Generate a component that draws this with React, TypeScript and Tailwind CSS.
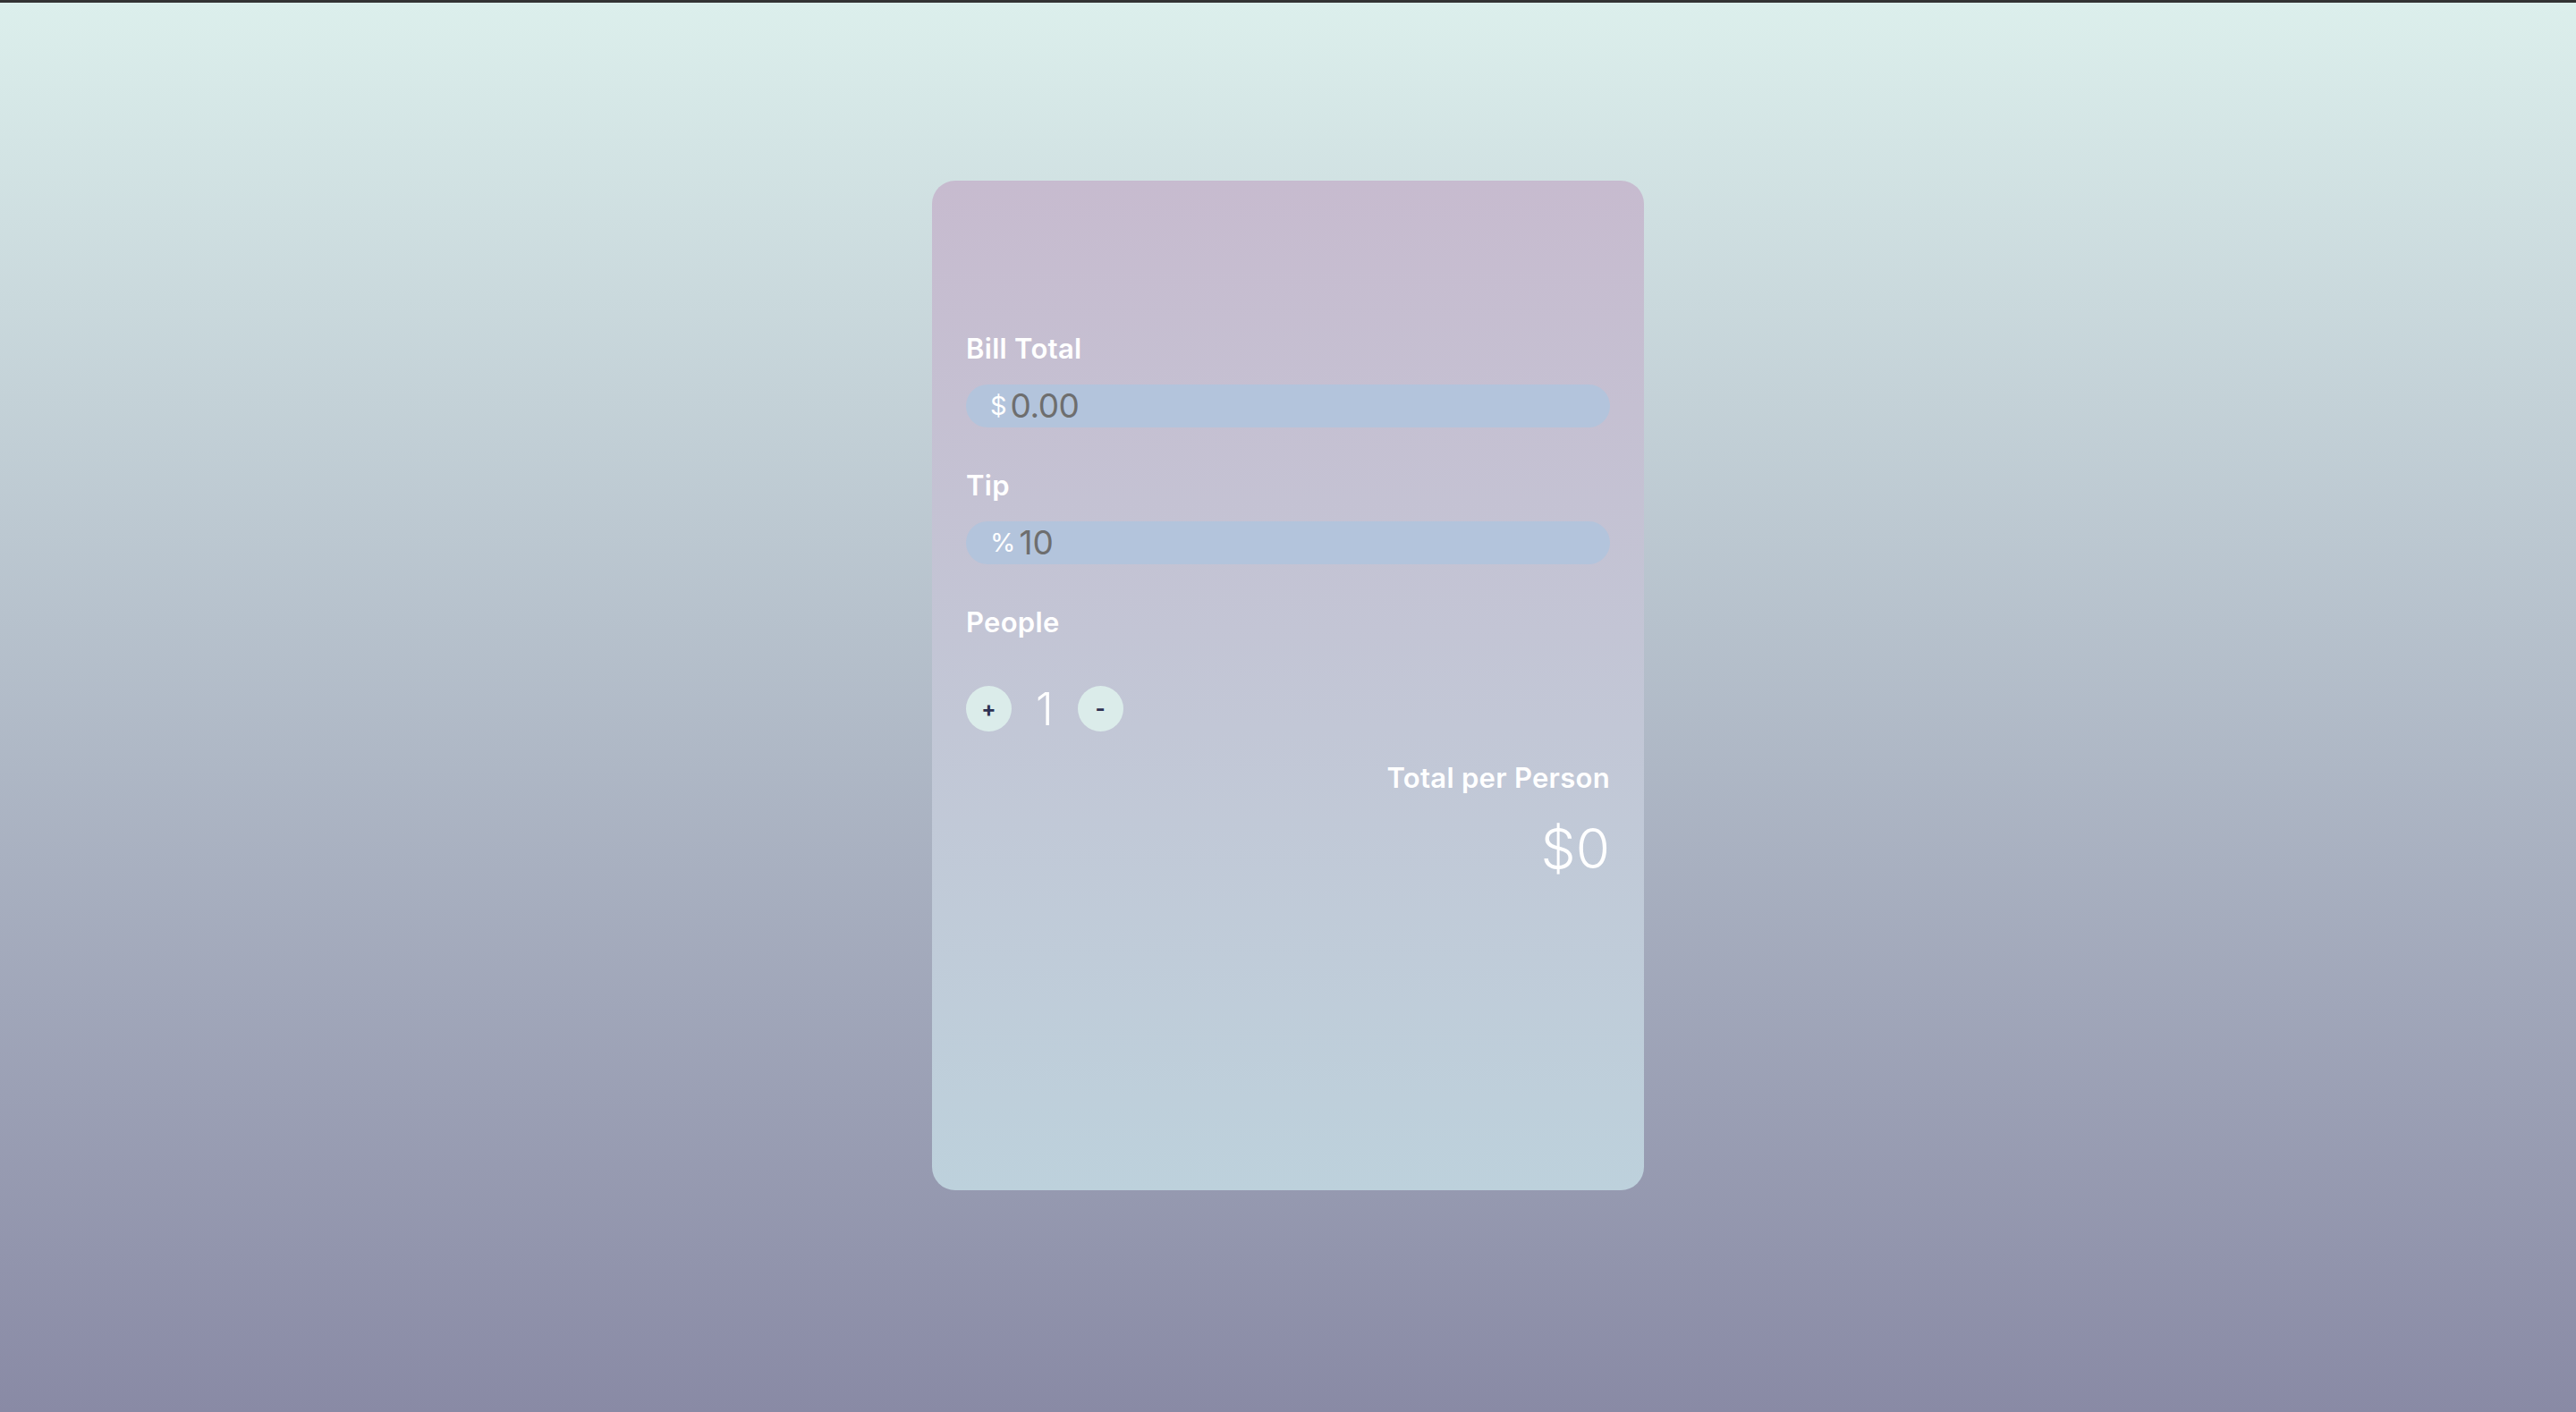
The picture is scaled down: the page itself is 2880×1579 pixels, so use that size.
import React, { useState } from "react";

export default function App() {
  const [people, setPeople] = useState(1);
  return (
    <div
      className="h-screen w-full border-t-[3px] border-[#333333] bg-gradient-to-b from-[#dcefec] to-[#898aa5] flex justify-center"
      style={{ fontFamily: "Inter, 'Noto Sans', sans-serif" }}
    >
      <div className="mt-[199px] w-[796px] h-[1129px] rounded-[26px] bg-gradient-to-b from-[#c7bbcf] to-[#bdd1dc] px-[38px] pt-[170px] flex flex-col">
        <label className="text-[31px] leading-[35px] tracking-[0.3px] font-semibold text-white">Bill Total</label>
        <div className="mt-[23px] h-[48px] rounded-full bg-[#b3c4dc] flex items-center pl-[27px]">
          <span className="text-[29px] text-white font-normal">$</span>
          <span className="ml-[4px] text-[37px] tracking-[-0.5px] text-[#6e6e6e] font-normal">0.00</span>
        </div>

        <label className="mt-[47px] text-[31px] leading-[35px] tracking-[0.3px] font-semibold text-white">Tip</label>
        <div className="mt-[23px] h-[48px] rounded-full bg-[#b3c4dc] flex items-center pl-[27px]">
          <span className="text-[29px] text-white font-normal">%</span>
          <span className="ml-[4px] text-[37px] text-[#6e6e6e] font-normal">10</span>
        </div>

        <label className="mt-[47px] text-[31px] leading-[35px] tracking-[0.3px] font-semibold text-white">People</label>
        <div className="mt-[54px] flex items-center">
          <button
            onClick={() => setPeople(people + 1)}
            className="w-[51px] h-[51px] rounded-full bg-[#dbecea] text-[#2e3152] text-[24px] font-bold flex items-center justify-center"
          >
            +
          </button>
          <span className="mx-[27px] text-[50px] leading-[50px] font-light text-white">{people}</span>
          <button
            onClick={() => setPeople(Math.max(1, people - 1))}
            className="w-[51px] h-[51px] rounded-full bg-[#dbecea] text-[#2e3152] text-[24px] font-bold flex items-center justify-center"
          >
            -
          </button>
        </div>

        <div className="mt-[34px] text-right text-[31px] leading-[35px] tracking-[0.3px] font-semibold text-white">Total per Person</div>
        <div className="mt-[32px] text-right text-[62px] leading-[60px] font-light text-white">$0</div>
      </div>
    </div>
  );
}
